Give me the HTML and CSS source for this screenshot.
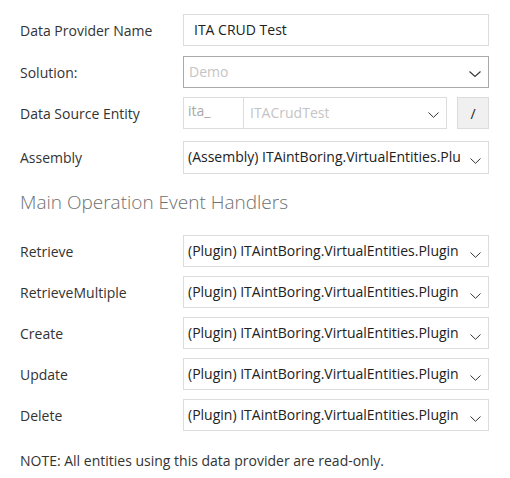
FILE: index.html
```html
<!DOCTYPE html>
<html>
<head>
<meta charset="utf-8">
<link rel="stylesheet" href="styles.css">
</head>
<body>
<div class="form">
  <div class="row r1">
    <div class="label">Data Provider Name</div>
    <div class="field input"><span class="val">ITA CRUD Test</span></div>
  </div>
  <div class="row r2">
    <div class="label">Solution:</div>
    <div class="field select disabled"><span class="val muted">Demo</span>
      <svg class="chev" width="12" height="6" viewBox="0 0 12 6"><polyline points="0.5,0.5 6,5.5 11.5,0.5" fill="none" stroke="#333" stroke-width="1.1"/></svg>
    </div>
  </div>
  <div class="row r3">
    <div class="label">Data Source Entity</div>
    <div class="entity">
      <div class="prefix">ita_</div>
      <div class="field select light ent"><span class="val muted">ITACrudTest</span>
        <svg class="chev" width="11" height="6" viewBox="0 0 11 6"><polyline points="0.5,0.5 5.5,5.3 10.5,0.5" fill="none" stroke="#333" stroke-width="1"/></svg>
      </div>
      <div class="btn">/</div>
    </div>
  </div>
  <div class="row r4">
    <div class="label">Assembly</div>
    <div class="field select light"><span class="val">(Assembly) ITAintBoring.VirtualEntities.Plu</span>
      <svg class="chev low" width="11" height="6" viewBox="0 0 11 6"><polyline points="0.5,0.5 5.5,5.3 10.5,0.5" fill="none" stroke="#333" stroke-width="1"/></svg>
    </div>
  </div>

  <h2 class="heading">Main Operation Event Handlers</h2>

  <div class="row pr">
    <div class="label">Retrieve</div>
    <div class="field select light"><span class="val">(Plugin) ITAintBoring.VirtualEntities.Plugin</span>
      <svg class="chev low" width="11" height="6" viewBox="0 0 11 6"><polyline points="0.5,0.5 5.5,5.3 10.5,0.5" fill="none" stroke="#333" stroke-width="1"/></svg>
    </div>
  </div>
  <div class="row pr">
    <div class="label">RetrieveMultiple</div>
    <div class="field select light"><span class="val">(Plugin) ITAintBoring.VirtualEntities.Plugin</span>
      <svg class="chev low" width="11" height="6" viewBox="0 0 11 6"><polyline points="0.5,0.5 5.5,5.3 10.5,0.5" fill="none" stroke="#333" stroke-width="1"/></svg>
    </div>
  </div>
  <div class="row pr">
    <div class="label">Create</div>
    <div class="field select light"><span class="val">(Plugin) ITAintBoring.VirtualEntities.Plugin</span>
      <svg class="chev low" width="11" height="6" viewBox="0 0 11 6"><polyline points="0.5,0.5 5.5,5.3 10.5,0.5" fill="none" stroke="#333" stroke-width="1"/></svg>
    </div>
  </div>
  <div class="row pr">
    <div class="label">Update</div>
    <div class="field select light"><span class="val">(Plugin) ITAintBoring.VirtualEntities.Plugin</span>
      <svg class="chev low" width="11" height="6" viewBox="0 0 11 6"><polyline points="0.5,0.5 5.5,5.3 10.5,0.5" fill="none" stroke="#333" stroke-width="1"/></svg>
    </div>
  </div>
  <div class="row pr">
    <div class="label">Delete</div>
    <div class="field select light"><span class="val">(Plugin) ITAintBoring.VirtualEntities.Plugin</span>
      <svg class="chev low" width="11" height="6" viewBox="0 0 11 6"><polyline points="0.5,0.5 5.5,5.3 10.5,0.5" fill="none" stroke="#333" stroke-width="1"/></svg>
    </div>
  </div>

  <p class="note">NOTE: All entities using this data provider are read-only.</p>
</div>
</body>
</html>
```
FILE: styles.css
```css
* { box-sizing: border-box; }
html, body { margin: 0; padding: 0; background: #fff; }
body {
  font-family: "Open Sans", "Noto Sans", "Liberation Sans", sans-serif;
  font-size: 14px;
  color: #333;
  width: 510px;
  height: 478px;
  overflow: hidden;
}
.form {
  padding: 14px 21px 0 20px;
}
.row {
  display: flex;
  align-items: center;
  height: 32px;
}
.r2 { margin-top: 10px; }
.r3 { margin-top: 9px; }
.r4 { margin-top: 12px; height: 33px; }
.pr { margin-top: 9px; }
.heading + .pr { margin-top: 0; }
.label {
  width: 163px;
  flex: none;
  color: #333;
  white-space: nowrap;
}
.field {
  flex: 1;
  height: 100%;
  border: 1px solid #dcdcdc;
  display: flex;
  align-items: center;
  padding: 0 0 0 4px;
  overflow: hidden;
  position: relative;
  color: #222;
  white-space: nowrap;
}
.input { padding-left: 10px; }
.select { padding-right: 28px; }
.select.disabled { border-color: #a9a9a9; padding-left: 5px; }
.val { overflow: hidden; display: block; margin-top: -2px; }
.muted { color: #c4c4c4; }
.chev {
  position: absolute;
  right: 7px;
  top: 14px;
}
.chev.low { top: 16px; }
.entity {
  flex: 1;
  display: flex;
  height: 100%;
}
.prefix {
  width: 61px;
  flex: none;
  border: 1px solid #dcdcdc;
  color: #a8a8a8;
  padding: 3px 0 0 4px;
}
.ent {
  border-left: none;
  padding-left: 6px;
}
.ent .chev { right: 7px; top: 14px; }
.btn {
  width: 32px;
  flex: none;
  margin-left: 10px;
  background: #f0f0f0;
  border: 1px solid #dcdcdc;
  display: flex;
  align-items: center;
  justify-content: center;
  color: #222;
}
.heading {
  font-weight: 300;
  font-size: 19px;
  color: #707070;
  margin: 0;
  height: 61px;
  padding-top: 16px;
  line-height: 24px;
}
.note {
  margin: 20px 0 0;
  color: #333;
  font-size: 14px;
}
```
